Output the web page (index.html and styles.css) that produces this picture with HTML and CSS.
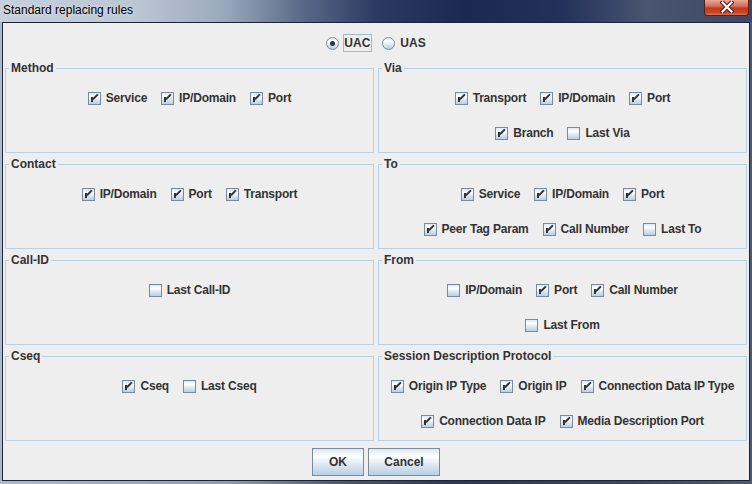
FILE: index.html
```html
<!DOCTYPE html>
<html lang="en">
<head>
  <meta charset="UTF-8">
  <title>Standard replacing rules</title>
  <link rel="stylesheet" href="styles.css">
</head>
<body>

<div class="window">
  <div class="titlebar">
    <span class="title">Standard replacing rules</span>
    <span class="close">
      <svg width="14" height="12" viewBox="0 0 14 12">
        <path d="M2.5 1.5 L11.5 10.5 M11.5 1.5 L2.5 10.5" stroke="#4a1d14" stroke-width="4.2" stroke-linecap="square"/>
        <path d="M2.5 1.5 L11.5 10.5 M11.5 1.5 L2.5 10.5" stroke="#fff" stroke-width="2.2" stroke-linecap="square"/>
      </svg>
    </span>
  </div>

  <div class="client">
    <!-- side the rules apply to -->
    <div class="mode">
      <span class="radio on"><span class="dot"></span><span class="focus">UAC</span></span>
      <span class="radio"><span class="dot"></span><span>UAS</span></span>
    </div>

    <div class="groups">
      <fieldset class="group">
        <legend>Method</legend>
        <div class="row">
          <span class="opt"><span class="box on"></span>Service</span>
          <span class="opt"><span class="box on"></span>IP/Domain</span>
          <span class="opt"><span class="box on"></span>Port</span>
        </div>
      </fieldset>

      <fieldset class="group">
        <legend>Via</legend>
        <div class="row">
          <span class="opt"><span class="box on"></span>Transport</span>
          <span class="opt"><span class="box on"></span>IP/Domain</span>
          <span class="opt"><span class="box on"></span>Port</span>
        </div>
        <div class="row">
          <span class="opt"><span class="box on"></span>Branch</span>
          <span class="opt"><span class="box"></span>Last Via</span>
        </div>
      </fieldset>

      <fieldset class="group">
        <legend>Contact</legend>
        <div class="row">
          <span class="opt"><span class="box on"></span>IP/Domain</span>
          <span class="opt"><span class="box on"></span>Port</span>
          <span class="opt"><span class="box on"></span>Transport</span>
        </div>
      </fieldset>

      <fieldset class="group">
        <legend>To</legend>
        <div class="row">
          <span class="opt"><span class="box on"></span>Service</span>
          <span class="opt"><span class="box on"></span>IP/Domain</span>
          <span class="opt"><span class="box on"></span>Port</span>
        </div>
        <div class="row">
          <span class="opt"><span class="box on"></span>Peer Tag Param</span>
          <span class="opt"><span class="box on"></span>Call Number</span>
          <span class="opt"><span class="box"></span>Last To</span>
        </div>
      </fieldset>

      <fieldset class="group">
        <legend>Call-ID</legend>
        <div class="row">
          <span class="opt"><span class="box"></span>Last Call-ID</span>
        </div>
      </fieldset>

      <fieldset class="group">
        <legend>From</legend>
        <div class="row">
          <span class="opt"><span class="box"></span>IP/Domain</span>
          <span class="opt"><span class="box on"></span>Port</span>
          <span class="opt"><span class="box on"></span>Call Number</span>
        </div>
        <div class="row">
          <span class="opt"><span class="box"></span>Last From</span>
        </div>
      </fieldset>

      <fieldset class="group">
        <legend>Cseq</legend>
        <div class="row">
          <span class="opt"><span class="box on"></span>Cseq</span>
          <span class="opt"><span class="box"></span>Last Cseq</span>
        </div>
      </fieldset>

      <fieldset class="group">
        <legend>Session Description Protocol</legend>
        <div class="row">
          <span class="opt"><span class="box on"></span>Origin IP Type</span>
          <span class="opt"><span class="box on"></span>Origin IP</span>
          <span class="opt"><span class="box on"></span>Connection Data IP Type</span>
        </div>
        <div class="row">
          <span class="opt"><span class="box on"></span>Connection Data IP</span>
          <span class="opt"><span class="box on"></span>Media Description Port</span>
        </div>
      </fieldset>
    </div>

    <div class="actions">
      <button class="btn ok">OK</button>
      <button class="btn cancel">Cancel</button>
    </div>
  </div>
</div>

</body>
</html>
```

FILE: styles.css
```css
body {
  margin: 0;
  font-family: 'Liberation Sans', Arial, sans-serif;
  background: #fff;
}

.window {
  width: 752px;
  height: 484px;
  display: flex;
  flex-direction: column;
  background: linear-gradient(90deg, #aeb9c9 0%, #8f9db3 30%, #4a5878 45%, #2a3760 60%, #3c4766 85%, #4f5a76 100%);
}

/* aero title bar */
.titlebar {
  height: 22px;
  flex: none;
  display: flex;
  align-items: flex-start;
  background: linear-gradient(90deg, #c6cfdb 0%, #bcc7d5 18%, #9aa8bd 30%, #5b6a88 40%, #2c3a62 50%, #1b2852 62%, #24315a 75%, #4a5571 86%, #3d4866 100%);
}

.title {
  margin: 3px 0 0 3px;
  font-size: 12px;
  line-height: 14px;
  color: #000;
  text-shadow: 0 0 4px rgba(255, 255, 255, 0.7);
}

.close {
  margin-left: auto;
  margin-right: 3px;
  width: 45px;
  height: 16px;
  box-sizing: border-box;
  border: 1px solid #5a1e12;
  border-top: none;
  border-radius: 0 0 4px 4px;
  background: linear-gradient(#e9a797 0%, #d8705b 40%, #c23a20 55%, #c8462c 85%, #dc7a5e 100%);
  display: flex;
  justify-content: center;
  align-items: flex-start;
}

.close svg {
  display: block;
  margin-top: 1px;
}

.client {
  flex: 1;
  margin: 0 2px 3px 2px;
  border: 1px solid #1e2432;
  background: #eeeeee;
  padding: 0 2px;
  color: #333;
  font-size: 12px;
  font-weight: bold;
}

/* UAC / UAS switch */
.mode {
  height: 18px;
  margin: 11px 0 9px;
  display: flex;
  justify-content: center;
  align-items: center;
  gap: 10px;
}

.radio {
  display: flex;
  align-items: center;
}

.dot {
  position: relative;
  width: 13px;
  height: 13px;
  box-sizing: border-box;
  border: 1px solid #7a8a99;
  border-radius: 50%;
  background: linear-gradient(#dde8f3 0%, #fff 30%, #dde8f3 60%, #b8cfe5 100%);
  margin-right: 5px;
}

.radio.on .dot::after {
  content: '';
  position: absolute;
  left: 3px;
  top: 3px;
  width: 5px;
  height: 5px;
  border-radius: 50%;
  background: #333;
}

.focus {
  border: 1px solid #a3b8cc;
  padding: 1px 1px 1px 0;
  margin-left: -1px;
}

.groups {
  display: grid;
  grid-template-columns: 1fr 1fr;
  grid-auto-rows: 92px;
  gap: 4px;
}

.group {
  margin: 0;
  padding: 11px 0 0;
  min-width: 0;
  border: 1px solid #b8cfe5;
  box-sizing: border-box;
  height: 92px;
}

.group legend {
  margin-left: 3px;
  padding: 0 2px;
  line-height: 14px;
  color: #333;
}

.row {
  height: 24px;
  display: flex;
  justify-content: center;
  align-items: center;
  gap: 14px;
}

.row + .row {
  margin-top: 11px;
}

.opt {
  display: flex;
  align-items: center;
  white-space: nowrap;
  letter-spacing: -0.2px;
}

/* metal style check box */
.box {
  position: relative;
  flex: none;
  width: 13px;
  height: 13px;
  box-sizing: border-box;
  border: 1px solid #7a8a99;
  background: linear-gradient(#dde8f3 0%, #fff 30%, #dde8f3 60%, #b8cfe5 100%);
  margin-right: 5px;
}

.box.on::before {
  content: '';
  position: absolute;
  left: 2px;
  top: 4px;
  width: 2px;
  height: 5px;
  background: #333;
}

.box.on::after {
  content: '';
  position: absolute;
  left: 3px;
  top: 3.5px;
  width: 6.5px;
  height: 2px;
  background: #333;
  transform: rotate(-45deg);
}

.actions {
  margin-top: 7px;
  display: flex;
  justify-content: center;
  gap: 4px;
}

.btn {
  height: 28px;
  border: 1px solid #7a8a99;
  border-radius: 0;
  background: linear-gradient(#dde8f3 0%, #fff 30%, #dde8f3 60%, #b8cfe5 100%);
  font-family: inherit;
  font-size: 12px;
  font-weight: bold;
  color: #333;
  padding: 0;
}

.btn.ok {
  width: 52px;
}

.btn.cancel {
  width: 72px;
}
```
